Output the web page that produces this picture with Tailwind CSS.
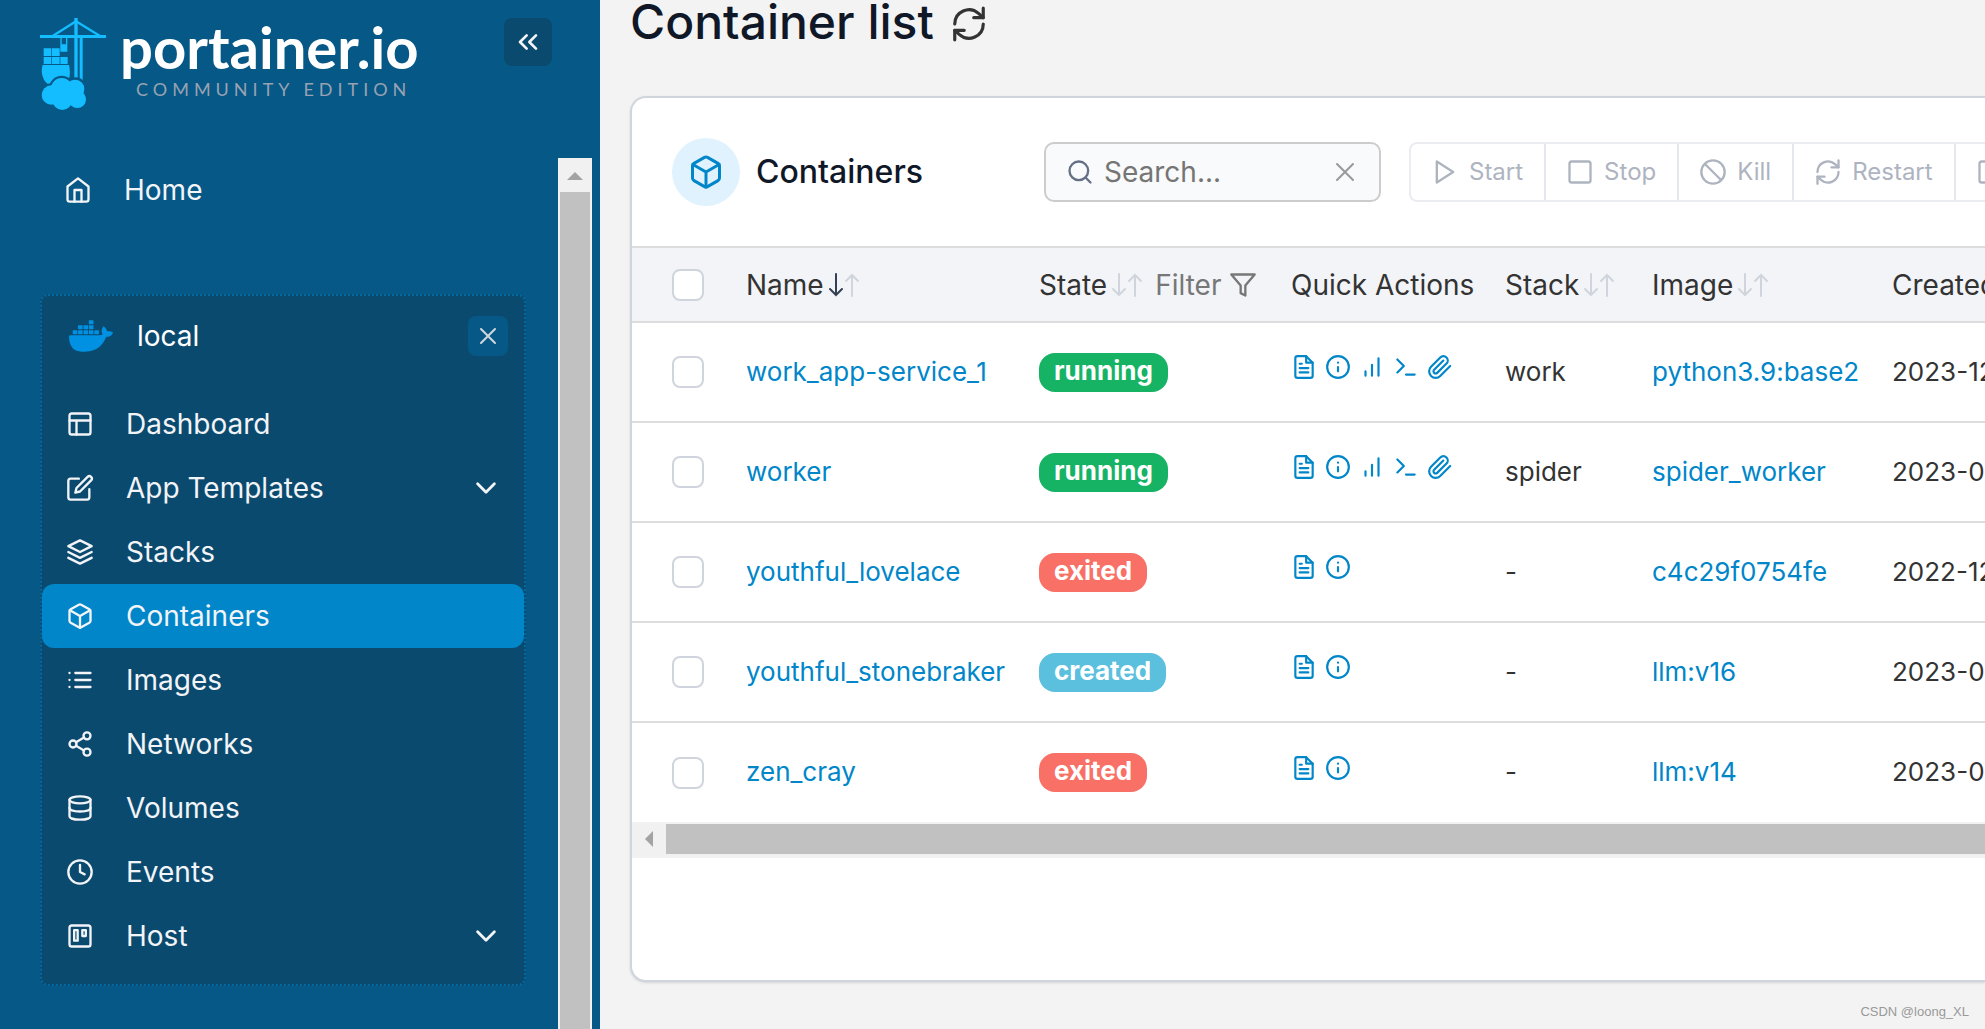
<!DOCTYPE html>
<html lang="en">
<head>
<meta charset="utf-8">
<meta name="viewport" content="width=device-width, initial-scale=1">
<title>Portainer - Container list</title>
<script src="https://cdn.jsdelivr.net/npm/@tailwindcss/browser@4"></script>
</head>
<body class="bg-[#f3f3f3] font-['Inter',sans-serif]">
<svg class="hidden" aria-hidden="true">
  <symbol id="home" viewBox="0 0 24 24"><path d="M3 9l9-7 9 7v11a2 2 0 0 1-2 2H5a2 2 0 0 1-2-2z"/><path d="M9 22V12h6v10"/></symbol>
  <symbol id="layout" viewBox="0 0 24 24"><rect x="3" y="3" width="18" height="18" rx="2"/><path d="M3 9h18M9 21V9"/></symbol>
  <symbol id="edit" viewBox="0 0 24 24"><path d="M11 4H4a2 2 0 0 0-2 2v14a2 2 0 0 0 2 2h14a2 2 0 0 0 2-2v-7"/><path d="M18.5 2.5a2.12 2.12 0 0 1 3 3L12 15l-4 1 1-4z"/></symbol>
  <symbol id="layers" viewBox="0 0 24 24"><path d="M12 2L2 7l10 5 10-5z"/><path d="M2 12l10 5 10-5"/><path d="M2 17l10 5 10-5"/></symbol>
  <symbol id="box" viewBox="0 0 24 24"><path d="M21 16V8a2 2 0 0 0-1-1.730l-7-4a2 2 0 0 0-2 0l-7 4A2 2 0 0 0 3 8v8a2 2 0 0 0 1 1.730l7 4a2 2 0 0 0 2 0l7-4A2 2 0 0 0 21 16z"/><path d="M3.300 7l8.700 5 8.700-5M12 22V12"/></symbol>
  <symbol id="list" viewBox="0 0 24 24"><path d="M8 6h13M8 12h13M8 18h13M3 6h.01M3 12h.01M3 18h.01"/></symbol>
  <symbol id="share" viewBox="0 0 24 24"><circle cx="18" cy="5" r="3"/><circle cx="6" cy="12" r="3"/><circle cx="18" cy="19" r="3"/><path d="M8.600 13.500l6.800 4M15.400 6.500l-6.800 4"/></symbol>
  <symbol id="database" viewBox="0 0 24 24"><ellipse cx="12" cy="5" rx="9" ry="3"/><path d="M21 12c0 1.700-4 3-9 3s-9-1.300-9-3"/><path d="M3 5v14c0 1.700 4 3 9 3s9-1.300 9-3V5"/></symbol>
  <symbol id="clock" viewBox="0 0 24 24"><circle cx="12" cy="12" r="10"/><path d="M12 6v6l4 2"/></symbol>
  <symbol id="trello" viewBox="0 0 24 24"><rect x="3" y="3" width="18" height="18" rx="2"/><path d="M7 7h3v9H7zM14 7h3v5h-3z"/></symbol>
  <symbol id="chevron" viewBox="0 0 24 24"><path d="M6 9l6 6 6-6"/></symbol>
  <symbol id="chevrons" viewBox="0 0 24 24"><path d="M11 17l-5-5 5-5M18 17l-5-5 5-5"/></symbol>
  <symbol id="x" viewBox="0 0 24 24"><path d="M18 6L6 18M6 6l12 12"/></symbol>
  <symbol id="refresh" viewBox="0 0 24 24"><path d="M21 2v6h-6M3 22v-6h6"/><path d="M3 12a9 9 0 0 1 15-6.700L21 8M21 12a9 9 0 0 1-15 6.700L3 16"/></symbol>
  <symbol id="search" viewBox="0 0 24 24"><circle cx="11" cy="11" r="8"/><path d="M21 21l-4.300-4.300"/></symbol>
  <symbol id="play" viewBox="0 0 24 24"><path d="M5 3l14 9-14 9z"/></symbol>
  <symbol id="square" viewBox="0 0 24 24"><rect x="3" y="3" width="18" height="18" rx="2"/></symbol>
  <symbol id="slash" viewBox="0 0 24 24"><circle cx="12" cy="12" r="10"/><path d="M4.900 4.900l14.200 14.200"/></symbol>
  <symbol id="filter" viewBox="0 0 24 24"><path d="M22 3H2l8 9.460V19l4 2v-8.540z"/></symbol>
  <symbol id="down" viewBox="0 0 16 24"><path d="M8 1v21M2 16l6 6 6-6"/></symbol>
  <symbol id="up" viewBox="0 0 16 24"><path d="M8 23V2M2 8l6-6 6 6"/></symbol>
  <symbol id="file" viewBox="0 0 24 24"><path d="M14 2H6a2 2 0 0 0-2 2v16a2 2 0 0 0 2 2h12a2 2 0 0 0 2-2V8z"/><path d="M14 2v6h6M16 13H8M16 17H8M10 9H8"/></symbol>
  <symbol id="info" viewBox="0 0 24 24"><circle cx="12" cy="12" r="10"/><path d="M12 16v-4M12 8h.01"/></symbol>
  <symbol id="bars" viewBox="0 0 24 24"><path d="M12 20V10M18 20V4M6 20v-4"/></symbol>
  <symbol id="terminal" viewBox="0 0 24 24"><path d="M4 17l6-6-6-6M12 19h8"/></symbol>
  <symbol id="clip" viewBox="0 0 24 24"><path d="M21.400 11.050l-9.190 9.190a6 6 0 0 1-8.490-8.490l8.570-8.570A4 4 0 1 1 18 8.840l-8.590 8.570a2 2 0 0 1-2.830-2.830l8.490-8.480"/></symbol>
</svg>

<div class="flex min-h-screen">
  <aside class="flex w-[600px] shrink-0 flex-col bg-[#065886] text-[#f2f4f7]">
    <header class="flex h-[158px] shrink-0 items-start justify-between pl-[30px] pr-12 pt-[10px]">
      <a href="#" class="flex" aria-label="portainer.io Community Edition">
        <svg class="h-[110px] w-[90px] fill-[#14bdff]" viewBox="0 0 270 330">
          <path d="M30 75h198v9H30zM133 24h10v184h-10zM149 84h9v130h-9z"/>
          <path d="M138 34L68 78M138 34l72 44" fill="none" stroke="#14bdff" stroke-width="7"/>
          <path d="M91 84h4v19h13V84h4v41H91zM41 115h23v23H41zM66 115h23v23H66zM41 141h23v21H41zM66 141h23v21H66zM91 141h22v21H91z"/>
          <path d="M38 165h79c5 25 3 45-10 60H58c-18-10-28-35-20-60z"/>
          <g stroke="#065886" stroke-width="8"><circle cx="64" cy="255" r="31"/><circle cx="95" cy="235" r="34"/><circle cx="136" cy="236" r="30"/><circle cx="142" cy="266" r="27"/><circle cx="97" cy="271" r="30"/></g>
          <circle cx="64" cy="255" r="29"/><circle cx="95" cy="236" r="32"/><circle cx="135" cy="237" r="28"/><circle cx="142" cy="268" r="26"/><circle cx="97" cy="270" r="30"/>
        </svg>
        <span class="flex flex-col">
          <span class="mt-[5px] font-['Lato',sans-serif] text-[58px] font-bold leading-[64px] text-white">portainer.io</span>
          <span class="pl-4 font-['Lato',sans-serif] text-[18px] leading-5 tracking-[5px] text-[#98a2b3]">COMMUNITY EDITION</span>
        </span>
      </a>
      <button class="mt-2 flex size-12 items-center justify-center rounded-lg bg-[#0b4a6f]" aria-label="Collapse sidebar"><svg class="size-8 fill-none stroke-current stroke-2" stroke-linecap="round" stroke-linejoin="round"><use href="#chevrons"/></svg></button>
    </header>
    <div class="flex flex-1 pr-2">
      <nav class="flex-1 pb-11 pl-10 pr-8 text-[28px]">
        <a href="#" class="flex h-16 items-center gap-8 pl-6"><svg class="size-7 fill-none stroke-current stroke-2" stroke-linecap="round" stroke-linejoin="round"><use href="#home"/></svg>Home</a>
        <section class="mt-[72px] rounded-lg border-2 border-dotted border-[#026aa2] bg-[#0b4a6f] pb-4">
          <div class="flex h-20 items-center pl-[27px] pr-4">
            <svg class="size-[44px] fill-[#0091e2]" viewBox="0 0 24 24"><path d="M13.983 11.078h2.119a.186.186 0 00.186-.185V9.006a.186.186 0 00-.186-.186h-2.119a.185.185 0 00-.185.185v1.888c0 .102.083.185.185.185m-2.954-5.430h2.118a.186.186 0 00.186-.186V3.574a.186.186 0 00-.186-.185h-2.118a.185.185 0 00-.185.185v1.888c0 .102.082.185.185.185m0 2.716h2.118a.187.187 0 00.186-.186V6.290a.186.186 0 00-.186-.185h-2.118a.185.185 0 00-.185.185v1.887c0 .102.082.185.185.186m-2.930 0h2.120a.186.186 0 00.184-.186V6.290a.185.185 0 00-.185-.185H8.100a.185.185 0 00-.185.185v1.887c0 .102.083.185.185.186m-2.964 0h2.119a.186.186 0 00.185-.186V6.290a.185.185 0 00-.185-.185H5.136a.186.186 0 00-.186.185v1.887c0 .102.084.185.186.186m5.893 2.715h2.118a.186.186 0 00.186-.185V9.006a.186.186 0 00-.186-.186h-2.118a.185.185 0 00-.185.185v1.888c0 .102.082.185.185.185m-2.930 0h2.120a.185.185 0 00.184-.185V9.006a.185.185 0 00-.184-.186h-2.120a.185.185 0 00-.184.185v1.888c0 .102.083.185.185.185m-2.964 0h2.119a.185.185 0 00.185-.185V9.006a.185.185 0 00-.184-.186h-2.120a.186.186 0 00-.186.186v1.887c0 .102.084.185.186.185m-2.920 0h2.120a.185.185 0 00.184-.185V9.006a.185.185 0 00-.184-.186h-2.120a.185.185 0 00-.184.185v1.888c0 .102.083.185.185.185M23.763 9.890c-.065-.051-.672-.510-1.954-.510-.338.001-.676.030-1.010.087-.248-1.700-1.653-2.530-1.716-2.566l-.344-.199-.226.327c-.284.438-.490.922-.612 1.430-.230.970-.090 1.882.403 2.661-.595.332-1.550.413-1.744.420H.751a.751.751 0 00-.750.748 11.376 11.376 0 00.692 4.062c.545 1.428 1.355 2.480 2.410 3.124 1.180.723 3.100 1.137 5.275 1.137.983.003 1.963-.086 2.930-.266a12.248 12.248 0 003.823-1.389c.980-.567 1.860-1.288 2.610-2.136 1.252-1.418 1.998-2.997 2.553-4.400h.221c1.372 0 2.215-.549 2.680-1.009.309-.293.550-.650.707-1.046l.098-.288z"/></svg>
            <span class="ml-6 flex-1 text-white">local</span>
            <button class="flex size-10 items-center justify-center rounded-lg bg-[#065886] text-[#d0d5dd]" aria-label="Close environment"><svg class="size-7 fill-none stroke-current stroke-[1.75]" stroke-linecap="round"><use href="#x"/></svg></button>
          </div>
          <ul class="mt-4 [&_a]:flex [&_a]:h-16 [&_a]:items-center [&_a]:gap-8 [&_a]:rounded-xl [&_a]:px-6 [&_svg]:size-7 [&_svg]:fill-none [&_svg]:stroke-current [&_svg]:stroke-2">
            <li><a href="#"><svg stroke-linecap="round" stroke-linejoin="round"><use href="#layout"/></svg>Dashboard</a></li>
            <li><a href="#"><svg stroke-linecap="round" stroke-linejoin="round"><use href="#edit"/></svg><span class="flex-1">App Templates</span><svg stroke-linecap="round" stroke-linejoin="round" viewBox="2 2 20 20"><path d="M6 9l6 6 6-6"/></svg></a></li>
            <li><a href="#"><svg stroke-linecap="round" stroke-linejoin="round"><use href="#layers"/></svg>Stacks</a></li>
            <li><a href="#" aria-current="page" class="bg-[#0086c9]"><svg stroke-linecap="round" stroke-linejoin="round"><use href="#box"/></svg>Containers</a></li>
            <li><a href="#"><svg stroke-linecap="round" stroke-linejoin="round"><use href="#list"/></svg>Images</a></li>
            <li><a href="#"><svg stroke-linecap="round" stroke-linejoin="round"><use href="#share"/></svg>Networks</a></li>
            <li><a href="#"><svg stroke-linecap="round" stroke-linejoin="round"><use href="#database"/></svg>Volumes</a></li>
            <li><a href="#"><svg stroke-linecap="round" stroke-linejoin="round"><use href="#clock"/></svg>Events</a></li>
            <li><a href="#"><svg stroke-linecap="round" stroke-linejoin="round"><use href="#trello"/></svg><span class="flex-1">Host</span><svg stroke-linecap="round" stroke-linejoin="round" viewBox="2 2 20 20"><path d="M6 9l6 6 6-6"/></svg></a></li>
          </ul>
        </section>
      </nav>
      <div class="flex w-[34px] flex-col bg-[#f1f1f1]" aria-hidden="true">
        <svg class="h-[34px] w-full shrink-0 fill-[#a3a3a3]" viewBox="0 0 34 34"><path d="M17 14l8 8H9z"/></svg>
        <div class="mx-[2px] flex-1 bg-[#c1c1c1]"></div>
      </div>
    </div>
  </aside>

  <main class="min-w-0 flex-1 overflow-hidden pl-[30px]">
    <div class="flex h-11 items-center gap-4">
      <h1 class="text-[48px] font-medium leading-[44px] text-[#101828]">Container list</h1>
      <button class="text-[#333]" aria-label="Refresh"><svg class="mt-1 size-[38px] fill-none stroke-current stroke-2" stroke-linecap="round" stroke-linejoin="round"><use href="#refresh"/></svg></button>
    </div>

    <section class="mt-[52px] overflow-hidden rounded-l-2xl border-2 border-r-0 border-[#d0d5dd] bg-white pb-[122px] shadow-sm">
      <div class="flex h-[148px] items-center pl-10">
        <span class="flex size-[68px] shrink-0 items-center justify-center rounded-full bg-[#e0f2fe] text-[#0086c9]"><svg class="size-9 fill-none stroke-current stroke-2" stroke-linecap="round" stroke-linejoin="round"><use href="#box"/></svg></span>
        <h2 class="ml-4 w-72 shrink-0 text-[32px] font-medium text-[#101828]">Containers</h2>
        <div class="flex h-[60px] w-[337px] shrink-0 items-center rounded-[10px] border-2 border-[#ccc] bg-[#f9fafb] pl-5 pr-[18px]">
          <svg class="size-7 shrink-0 fill-none stroke-[#667085] stroke-2" stroke-linecap="round"><use href="#search"/></svg>
          <input type="text" aria-label="Search containers" placeholder="Search..." class="ml-[10px] min-w-0 flex-1 bg-transparent text-[28px] outline-none placeholder:text-[#757575]">
          <button class="text-[#999]" aria-label="Clear search"><svg class="size-8 fill-none stroke-current stroke-[1.5]" stroke-linecap="round"><use href="#x"/></svg></button>
        </div>
        <div class="ml-7 flex h-[60px] shrink-0 rounded-lg border-2 border-[#eaecf0] text-2xl text-[#aeb4bf] [&_button]:flex [&_button]:items-center [&_button]:gap-[10px] [&_button]:border-r-2 [&_button]:border-[#e4e7ec] [&_button]:pl-5 [&_button]:pr-[21px] [&_svg]:size-7 [&_svg]:fill-none [&_svg]:stroke-current [&_svg]:stroke-2">
          <button disabled><svg stroke-linejoin="round"><use href="#play"/></svg>Start</button>
          <button disabled><svg stroke-linejoin="round"><use href="#square"/></svg>Stop</button>
          <button disabled><svg><use href="#slash"/></svg>Kill</button>
          <button disabled><svg stroke-linejoin="round" stroke-linecap="round"><use href="#refresh"/></svg>Restart</button>
          <button disabled aria-label="Pause"><svg stroke-linejoin="round"><use href="#square"/></svg></button>
        </div>
      </div>

      <table class="w-[1600px] table-fixed border-collapse text-left text-[26px] text-[#333] [&_a]:text-[#0086c9] [&_input]:block [&_input]:size-8 [&_input]:appearance-none [&_input]:rounded-lg [&_input]:border-2 [&_input]:border-[#d0d5dd] [&_input]:bg-white [&_td]:whitespace-nowrap [&_td]:pb-[2px] [&_td:first-child]:pb-0 [&_td:has(mark)]:pb-0 [&_th]:font-normal">
        <colgroup><col class="w-[114px]"><col class="w-[293px]"><col class="w-[252px]"><col class="w-[214px]"><col class="w-[147px]"><col class="w-[240px]"><col></colgroup>
        <thead class="bg-[#f2f4f7] text-[28px]">
          <tr class="h-[75px] border-y-2 border-[#ddd]">
            <th class="pl-10"><input type="checkbox" aria-label="Select all"></th>
            <th><div class="flex items-center">Name<svg class="ml-1 h-6 w-4 fill-none stroke-[#344054] stroke-2" stroke-linecap="round"><use href="#down"/></svg><svg class="h-6 w-4 fill-none stroke-[#d0d5dd] stroke-2" stroke-linecap="round"><use href="#up"/></svg></div></th>
            <th><div class="flex items-center">State<svg class="ml-1 h-6 w-4 fill-none stroke-[#d0d5dd] stroke-2" stroke-linecap="round"><use href="#down"/></svg><svg class="h-6 w-4 fill-none stroke-[#d0d5dd] stroke-2" stroke-linecap="round"><use href="#up"/></svg><button class="ml-3 flex items-center gap-2 text-[#777]">Filter<svg class="size-7 fill-none stroke-current stroke-2" stroke-linejoin="round"><use href="#filter"/></svg></button></div></th>
            <th>Quick Actions</th>
            <th><div class="flex items-center">Stack<svg class="ml-1 h-6 w-4 fill-none stroke-[#d0d5dd] stroke-2" stroke-linecap="round"><use href="#down"/></svg><svg class="h-6 w-4 fill-none stroke-[#d0d5dd] stroke-2" stroke-linecap="round"><use href="#up"/></svg></div></th>
            <th><div class="flex items-center">Image<svg class="ml-1 h-6 w-4 fill-none stroke-[#d0d5dd] stroke-2" stroke-linecap="round"><use href="#down"/></svg><svg class="h-6 w-4 fill-none stroke-[#d0d5dd] stroke-2" stroke-linecap="round"><use href="#up"/></svg></div></th>
            <th>Created</th>
          </tr>
        </thead>
        <tbody class="[&_mark]:block [&_mark]:h-[39px] [&_mark]:w-fit [&_mark]:rounded-2xl [&_mark]:px-[15px] [&_mark]:font-bold [&_mark]:leading-9 [&_mark]:text-white [&_nav]:flex [&_nav]:gap-2 [&_nav]:pb-2 [&_svg]:size-[26px] [&_svg]:fill-none [&_svg]:stroke-current [&_svg]:stroke-2 [&_tr]:h-[100px]">
          <tr class="border-b-2 border-[#ddd]">
            <td class="pl-10"><input type="checkbox" aria-label="Select work_app-service_1"></td>
            <td><a href="#">work_app-service_1</a></td>
            <td><mark class="bg-[#16b364]">running</mark></td>
            <td><nav aria-label="Quick actions"><a href="#" aria-label="Logs"><svg stroke-linejoin="round" stroke-linecap="round"><use href="#file"/></svg></a><a href="#" aria-label="Inspect"><svg stroke-linecap="round"><use href="#info"/></svg></a><a href="#" aria-label="Stats"><svg stroke-linecap="round"><use href="#bars"/></svg></a><a href="#" aria-label="Console"><svg stroke-linejoin="round" stroke-linecap="round"><use href="#terminal"/></svg></a><a href="#" aria-label="Attach"><svg stroke-linejoin="round" stroke-linecap="round"><use href="#clip"/></svg></a></nav></td>
            <td>work</td>
            <td><a href="#">python3.9:base2</a></td>
            <td>2023-12</td>
          </tr>
          <tr class="border-b-2 border-[#ddd]">
            <td class="pl-10"><input type="checkbox" aria-label="Select worker"></td>
            <td><a href="#">worker</a></td>
            <td><mark class="bg-[#16b364]">running</mark></td>
            <td><nav aria-label="Quick actions"><a href="#" aria-label="Logs"><svg stroke-linejoin="round" stroke-linecap="round"><use href="#file"/></svg></a><a href="#" aria-label="Inspect"><svg stroke-linecap="round"><use href="#info"/></svg></a><a href="#" aria-label="Stats"><svg stroke-linecap="round"><use href="#bars"/></svg></a><a href="#" aria-label="Console"><svg stroke-linejoin="round" stroke-linecap="round"><use href="#terminal"/></svg></a><a href="#" aria-label="Attach"><svg stroke-linejoin="round" stroke-linecap="round"><use href="#clip"/></svg></a></nav></td>
            <td>spider</td>
            <td><a href="#">spider_worker</a></td>
            <td>2023-0</td>
          </tr>
          <tr class="border-b-2 border-[#ddd]">
            <td class="pl-10"><input type="checkbox" aria-label="Select youthful_lovelace"></td>
            <td><a href="#">youthful_lovelace</a></td>
            <td><mark class="bg-[#f97066]">exited</mark></td>
            <td><nav aria-label="Quick actions"><a href="#" aria-label="Logs"><svg stroke-linejoin="round" stroke-linecap="round"><use href="#file"/></svg></a><a href="#" aria-label="Inspect"><svg stroke-linecap="round"><use href="#info"/></svg></a></nav></td>
            <td>-</td>
            <td><a href="#">c4c29f0754fe</a></td>
            <td>2022-12</td>
          </tr>
          <tr class="border-b-2 border-[#ddd]">
            <td class="pl-10"><input type="checkbox" aria-label="Select youthful_stonebraker"></td>
            <td><a href="#">youthful_stonebraker</a></td>
            <td><mark class="bg-[#5bc0de]">created</mark></td>
            <td><nav aria-label="Quick actions"><a href="#" aria-label="Logs"><svg stroke-linejoin="round" stroke-linecap="round"><use href="#file"/></svg></a><a href="#" aria-label="Inspect"><svg stroke-linecap="round"><use href="#info"/></svg></a></nav></td>
            <td>-</td>
            <td><a href="#">llm:v16</a></td>
            <td>2023-0</td>
          </tr>
          <tr>
            <td class="pl-10"><input type="checkbox" aria-label="Select zen_cray"></td>
            <td><a href="#">zen_cray</a></td>
            <td><mark class="bg-[#f97066]">exited</mark></td>
            <td><nav aria-label="Quick actions"><a href="#" aria-label="Logs"><svg stroke-linejoin="round" stroke-linecap="round"><use href="#file"/></svg></a><a href="#" aria-label="Inspect"><svg stroke-linecap="round"><use href="#info"/></svg></a></nav></td>
            <td>-</td>
            <td><a href="#">llm:v14</a></td>
            <td>2023-0</td>
          </tr>
        </tbody>
      </table>
      <div class="flex h-9 bg-[#f1f1f1] pb-1 pt-[2px]" aria-hidden="true">
        <svg class="h-full w-[34px] shrink-0 fill-[#a3a3a3]" viewBox="0 0 34 30"><path d="M13 15l8-8v16z"/></svg>
        <div class="flex-1 bg-[#c1c1c1]"></div>
      </div>
    </section>
    <p class="mt-5 pr-4 text-right font-['Liberation_Sans',sans-serif] text-[13px] leading-5 text-[#999]">CSDN @loong_XL</p>
  </main>
</div>
</body>
</html>
